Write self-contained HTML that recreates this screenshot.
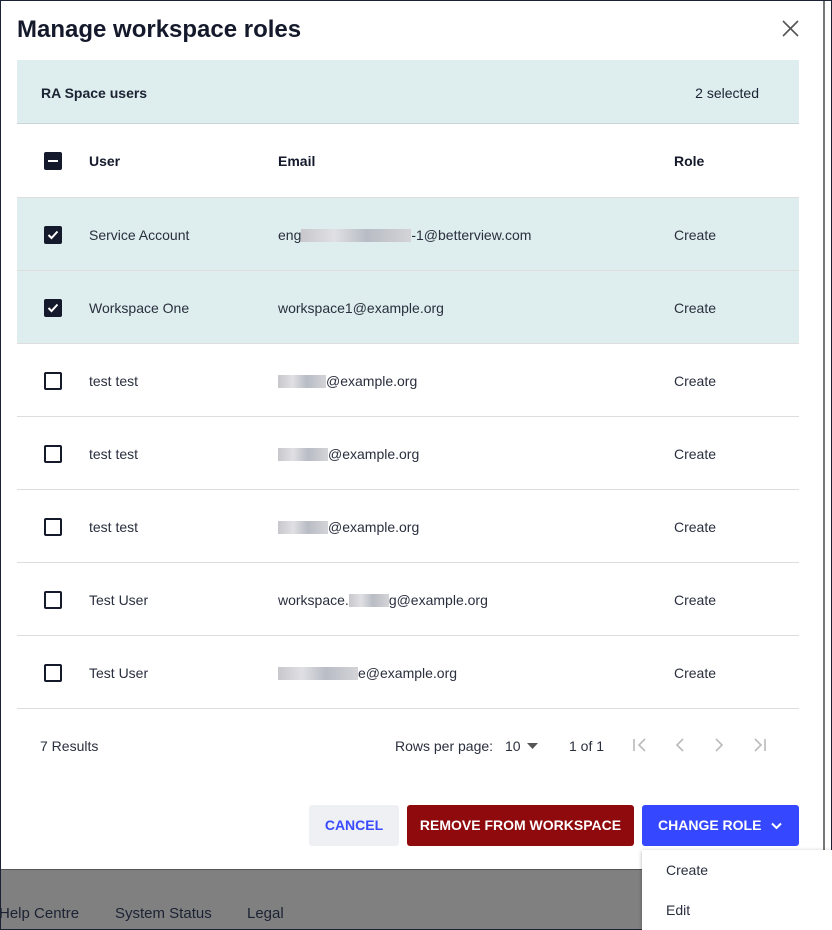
<!DOCTYPE html>
<html><head><meta charset="utf-8"><style>
*{box-sizing:border-box;margin:0;padding:0}
body{width:832px;height:930px;overflow:hidden;background:#1b2233;font-family:"Liberation Sans",sans-serif;color:#1b2233;position:relative}
.modal{position:absolute;left:1px;top:1px;width:822px;height:869px;background:#fff}
.rstrip{position:absolute;left:823px;top:1px;width:8px;height:869px;background:#fff;border-left:2px solid #777}
.footer{position:absolute;left:1px;top:869px;width:830px;height:60px;background:#808080;border-top:1px solid #555;font-size:15px;color:#1b2233}
.footer span{position:absolute;top:35px}
h1{position:absolute;left:16px;top:15px;font-size:24px;font-weight:bold;color:#14192b}
.close{position:absolute;left:781px;top:19px}
.band{position:absolute;left:16px;top:59px;width:782px;height:64px;background:#deeded;border-bottom:1px solid #c9d3d8;font-size:14px}
.band b{position:absolute;left:24px;top:25px}
.band span{position:absolute;right:40px;top:25px}
.row{position:absolute;left:16px;width:782px;height:73px;border-bottom:1px solid #dedede;font-size:14px;color:#2a2f3e}
.row.sel{background:#deeded}
.row .cb{position:absolute;left:27px;top:28px;width:18px;height:18px;border:2px solid #14192b;border-radius:2px;background:#fff}
.row.sel .cb,.row.hd .cb{background:#14192b}
.row .u{position:absolute;left:72px;top:29px}
.row .e{position:absolute;left:261px;top:29px}
.row .r{position:absolute;left:657px;top:29px}
.hd{font-weight:bold;color:#14192b;border-bottom:1px solid #dedede}
.bl{display:inline-block;height:13px;background:linear-gradient(90deg,#c8c8cc,#e0e0e4 30%,#b8bcc4 60%,#d4d4d8);vertical-align:-2px}
.pg{position:absolute;top:737px;font-size:14px;color:#2a2f3e}
.btn{position:absolute;top:804px;height:41px;border-radius:3px;font-weight:bold;font-size:14px;text-align:center;line-height:41px}
.menu{position:absolute;left:642px;top:850px;width:190px;height:80px;background:#fff;box-shadow:0 1px 4px rgba(0,0,0,.3);font-size:14px;color:#2a2f3e}
.menu span{position:absolute;left:24px}
</style></head><body>
<div class="modal">
<h1>Manage workspace roles</h1>
<svg class="close" width="17" height="17" viewBox="0 0 17 17"><path d="M1 1L16 16M16 1L1 16" stroke="#555" stroke-width="1.6"/></svg>
<div class="band"><b>RA Space users</b><span>2 selected</span></div>
<div class="row hd" style="top:123px;height:74px"><div class="cb"><div style="position:absolute;left:2px;top:6px;width:10px;height:2px;background:#fff"></div></div><span class="u" style="top:29px">User</span><span class="e" style="top:29px">Email</span><span class="r" style="top:29px">Role</span></div>
<div class="row sel" style="top:197px"><div class="cb"><svg width="14" height="14" style="position:absolute;left:0;top:0"><path d="M2.5 7l3 3 6-6.5" stroke="#fff" stroke-width="2" fill="none"/></svg></div><span class="u">Service Account</span><span class="e">eng<span class="bl" style="width:110px"></span>-1@betterview.com</span><span class="r">Create</span></div>
<div class="row sel" style="top:270px"><div class="cb"><svg width="14" height="14" style="position:absolute;left:0;top:0"><path d="M2.5 7l3 3 6-6.5" stroke="#fff" stroke-width="2" fill="none"/></svg></div><span class="u">Workspace One</span><span class="e">workspace1@example.org</span><span class="r">Create</span></div>
<div class="row" style="top:343px"><div class="cb"></div><span class="u">test test</span><span class="e"><span class="bl" style="width:48px"></span>@example.org</span><span class="r">Create</span></div>
<div class="row" style="top:416px"><div class="cb"></div><span class="u">test test</span><span class="e"><span class="bl" style="width:50px"></span>@example.org</span><span class="r">Create</span></div>
<div class="row" style="top:489px"><div class="cb"></div><span class="u">test test</span><span class="e"><span class="bl" style="width:50px"></span>@example.org</span><span class="r">Create</span></div>
<div class="row" style="top:562px"><div class="cb"></div><span class="u">Test User</span><span class="e">workspace.<span class="bl" style="width:40px"></span>g@example.org</span><span class="r">Create</span></div>
<div class="row" style="top:635px"><div class="cb"></div><span class="u">Test User</span><span class="e"><span class="bl" style="width:80px"></span>e@example.org</span><span class="r">Create</span></div>
<span class="pg" style="left:39px">7 Results</span>
<span class="pg" style="left:394px">Rows per page:</span>
<span class="pg" style="left:504px">10</span>
<svg style="position:absolute;left:526px;top:742px" width="12" height="6"><path d="M0 0h11L5.5 6z" fill="#555"/></svg>
<span class="pg" style="left:568px">1 of 1</span>
<svg style="position:absolute;left:630px;top:736px" width="140" height="16" fill="none" stroke="#bbb" stroke-width="1.6"><path d="M3 2v12M14 2l-6 6 6 6"/><path d="M52 2l-6 6 6 6"/><path d="M85 2l6 6-6 6"/><path d="M124 2l6 6-6 6M134 2v12"/></svg>
<div class="btn" style="left:308px;width:90px;background:#eff0f4;color:#3a4bff">CANCEL</div>
<div class="btn" style="left:406px;width:227px;background:#8f0a0c;color:#fff">REMOVE FROM WORKSPACE</div>
<div class="btn" style="left:641px;width:157px;background:#3548ff;color:#fff;text-align:left;padding-left:16px">CHANGE ROLE<svg style="position:absolute;left:129px;top:17px" width="11" height="8"><path d="M1 1.5l4.5 4.5 4.5-4.5" stroke="#fff" stroke-width="2" fill="none"/></svg></div>
</div>
<div class="rstrip"></div>
<div class="footer"><span style="left:-2px">Help Centre</span><span style="left:114px">System Status</span><span style="left:246px">Legal</span></div>
<div class="menu"><span style="top:12px">Create</span><span style="top:52px">Edit</span></div>
</body></html>
